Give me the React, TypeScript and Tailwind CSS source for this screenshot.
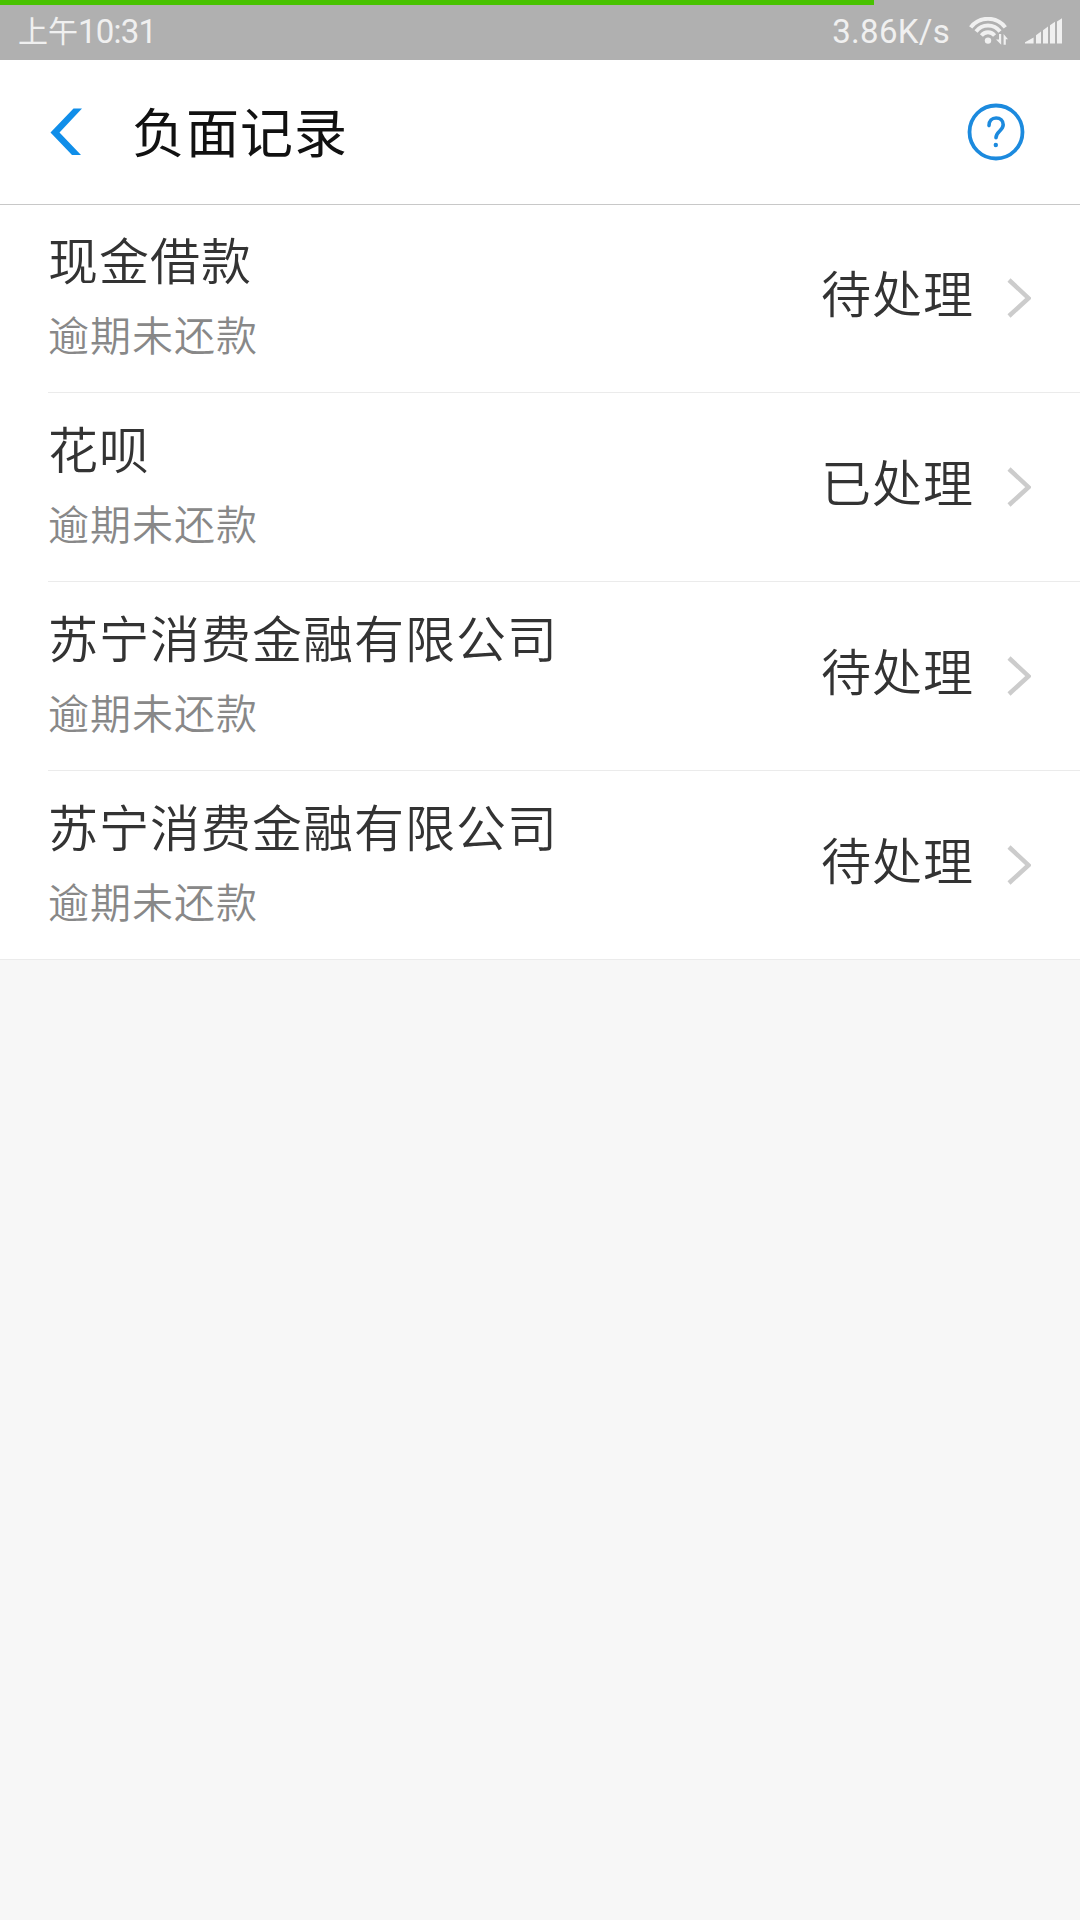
import React from 'react';

interface RecordItem {
  title: string;
  reason: string;
  status: string;
}

const records: RecordItem[] = [
  { title: '现金借款', reason: '逾期未还款', status: '待处理' },
  { title: '花呗', reason: '逾期未还款', status: '已处理' },
  { title: '苏宁消费金融有限公司', reason: '逾期未还款', status: '待处理' },
  { title: '苏宁消费金融有限公司', reason: '逾期未还款', status: '待处理' },
];

const WifiIcon: React.FC = () => (
  <svg className="w-10 h-7 ml-[18px]" viewBox="0 0 40 28" fill="none" stroke="#f0f0f0" strokeWidth="4">
    <path d="M2.7 10.4a21.7 21.7 0 0 1 34.6 0" />
    <path d="M8 14.5a15 15 0 0 1 24 0" strokeWidth="3.8" />
    <path d="M13.4 18.5a8.3 8.3 0 0 1 13.2 0" strokeWidth="3.8" />
    <circle cx="20" cy="23.6" r="3.2" fill="#f0f0f0" stroke="none" />
    {/* 上下行箭头 */}
    <path d="M31 17h2.2v10.8L28 22.5h3zM35.6 17l4.4 5.2h-2.2v5.6h-2.2z" fill="#f0f0f0" stroke="#b0b0b0" strokeWidth="1.2" paintOrder="stroke" />
  </svg>
);

const SignalIcon: React.FC = () => (
  <svg className="w-[38px] h-7 ml-[17px]" viewBox="0 0 38 28" fill="#f0f0f0">
    <path d="M0 26.5V25.3L8.6 20.5v6zM11 26.5V18.2l5-3.6v11.9zM18 26.5V13.2l5-3.6v16.9zM25 26.5V8.3l5-3.6v21.8zM32 26.5V4.5l5-3.2v25.2z" />
  </svg>
);

const StatusBar: React.FC = () => (
  <div className="h-[60px] bg-[#b0b0b0] text-[#f0f0f0]">
    <div className="w-[874px] h-[5px] bg-[#48c200]" />
    <div className="h-[55px] pb-[4px] pl-[18px] pr-[17px] flex items-center justify-between text-[33px] leading-[51px]">
      <div className="flex items-center">
        <span className="text-[30px] -mt-[2px]">上午</span>
        <span className="mt-[2px] font-['Roboto',sans-serif] tracking-[-0.8px]">10:31</span>
      </div>
      <div className="flex items-center">
        <span className="mt-[2px] font-['Roboto',sans-serif] tracking-[0.3px]">3.86K/s</span>
        <WifiIcon />
        <SignalIcon />
      </div>
    </div>
  </div>
);

const Header: React.FC = () => (
  <header className="h-[145px] pl-[50px] pr-[55px] bg-white border-b border-[#c8c8c8] flex items-center">
    <svg className="w-8 h-12" viewBox="0 0 32 48" fill="#108ee9">
      <path d="M23.5 .5H32L9.5 24.5 31 47H22L.5 24.5z" />
    </svg>
    <h1 className="ml-[50px] -mt-[4px] flex-1 text-[53px] leading-[60px] tracking-[1px] text-[#111]">负面记录</h1>
    <svg className="w-[58px] h-[58px]" viewBox="0 0 58 58" fill="none" stroke="#1c8ade" strokeWidth="3.8" strokeLinecap="round">
      <circle cx="29" cy="29" r="26.5" />
      <path d="M22 22.6c0-4.8 3-7.6 7.1-7.6s7.1 2.8 7.1 6.8c0 6-7.2 6.4-7.2 13" strokeWidth="3.6" />
      <circle cx="28.8" cy="42" r="2.2" fill="#1c8ade" stroke="none" />
    </svg>
  </header>
);

const RecordRow: React.FC<{ item: RecordItem }> = ({ item }) => (
  <li className="ml-[48px] h-[189px] pt-px pr-[49px] border-b border-[#ebebeb] first:h-[188px] first:pt-0 last:h-[188px] last:border-b-0 flex items-start">
    <div className="flex-1 pt-[17px]">
      <p className="text-[50px] leading-[72px] font-[350] tracking-[1px] text-[#333]">{item.title}</p>
      <p className="mt-[7px] text-[41px] leading-[64px] font-[350] tracking-[1px] text-[#888]">{item.reason}</p>
    </div>
    <span className="mt-[50px] mr-[33px] text-[50px] leading-[72px] font-[350] tracking-[1px] text-[#333]">{item.status}</span>
    <svg className="w-6 h-10 mt-[73px]" viewBox="0 0 24 40" fill="none" stroke="#ccc" strokeWidth="4.5">
      <path d="M2 2 21.5 20.2 2 38" />
    </svg>
  </li>
);

export default function App() {
  return (
    <div className="w-[1080px] h-[1920px] overflow-hidden bg-[#f7f7f7] font-['Noto_Sans_CJK_SC','Noto_Sans',sans-serif]">
      <StatusBar />
      <Header />
      <ul className="bg-white border-b border-[#ebebeb]">
        {records.map((item, index) => (
          <RecordRow key={index} item={item} />
        ))}
      </ul>
    </div>
  );
}
